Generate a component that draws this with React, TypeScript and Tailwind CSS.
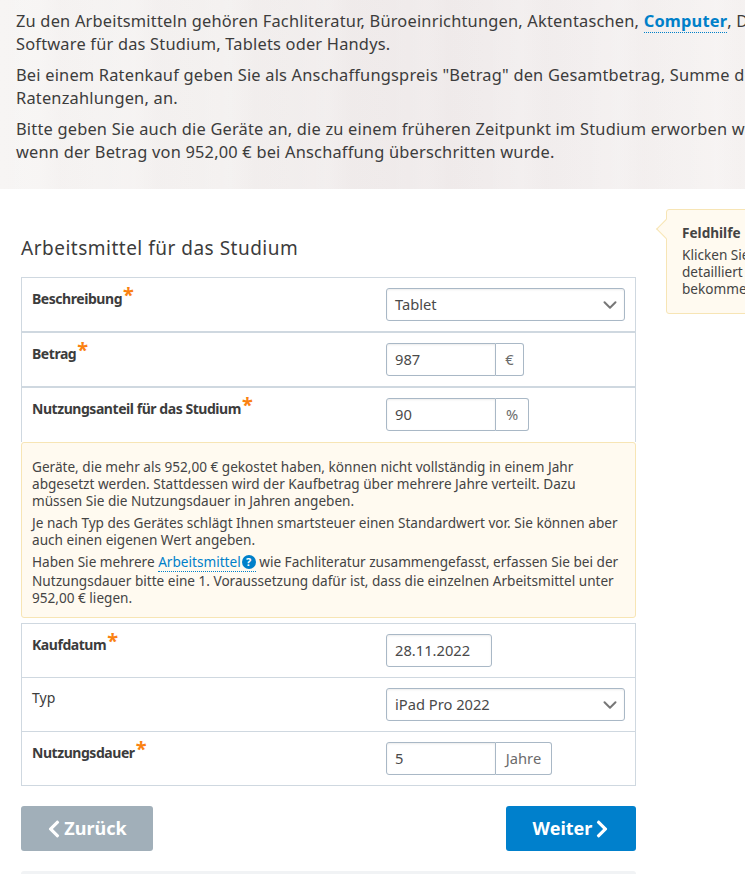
import { ChevronDown } from "lucide-react";
import { FaChevronLeft, FaChevronRight } from "react-icons/fa";
import type { ReactNode } from "react";

const Star = () => (
  <span className="relative -top-[2px] ml-px text-[20px] leading-none font-bold text-[#fa8212]">*</span>
);

function Row({
  label,
  required = true,
  border = "border-b border-[#cfd8e0]",
  height,
  children,
}: {
  label: string;
  required?: boolean;
  border?: string;
  height: string;
  children: ReactNode;
}) {
  return (
    <div className={`flex ${height} ${border}`}>
      <div
        className={`w-[364px] shrink-0 pl-[10px] text-[14px] leading-[20px] text-[#3c3c3c] ${required ? "pt-[9px]" : "pt-[10px]"}`}
      >
        {required ? <span className="font-bold tracking-[-0.45px]">{label}</span> : label}
        {required && <Star />}
      </div>
      <div className="pt-[10px]">{children}</div>
    </div>
  );
}

function Select({ value }: { value: string }) {
  return (
    <div className="flex h-[33px] w-[239px] items-center justify-between rounded-[3px] border border-[#a9b8c6] pr-[3px] pl-2 text-[14.7px] text-[#4a4a4a] shadow-[inset_0_1px_2px_rgba(0,0,0,0.08)]">
      <span>{value}</span>
      <ChevronDown className="h-[22px] w-[22px] text-[#777777]" strokeWidth={2.2} />
    </div>
  );
}

function UnitInput({ value, unit, unitWidth }: { value: string; unit: string; unitWidth: string }) {
  return (
    <div className="flex h-[33px] text-[14.7px]">
      <div className="flex w-[110px] items-center rounded-l-[3px] border border-[#a9b8c6] pl-2 text-[#4a4a4a] shadow-[inset_0_1px_2px_rgba(0,0,0,0.08)]">
        {value}
      </div>
      <div className={`flex ${unitWidth} items-center justify-center rounded-r-[3px] border border-l-0 border-[#a9b8c6] text-[#6b6b6b]`}>
        {unit}
      </div>
    </div>
  );
}

export default function App() {
  return (
    <div className="h-[874px] w-[745px] overflow-hidden bg-white font-['Noto_Sans',sans-serif] text-[#3c3c3c]">
      <div className="h-[189px] w-[745px] bg-[repeating-linear-gradient(90deg,rgba(255,255,255,0)_0px,rgba(255,255,255,0.12)_37px,rgba(230,222,222,0.08)_61px,rgba(255,255,255,0)_97px),linear-gradient(90deg,#f7f5f4,#f3f0ef_30%,#efeaea_55%,#f2eeee_75%,#f6f3f2)] pt-[9px] pl-[16px] text-[16.4px] leading-[23px] tracking-[0.2px] whitespace-nowrap">
        <p>
          Zu den Arbeitsmitteln gehören Fachliteratur, Büroeinrichtungen, Aktentaschen,{" "}
          <span className="border-b border-dotted border-[#0080c9] font-bold text-[#0080c9]">Computer</span>, Drucker,
          <br />
          Software für das Studium, Tablets oder Handys.
        </p>
        <p className="mt-[8px]">
          Bei einem Ratenkauf geben Sie als Anschaffungspreis "Betrag" den Gesamtbetrag, Summe der
          <br />
          Ratenzahlungen, an.
        </p>
        <p className="mt-[8px]">
          Bitte geben Sie auch die Geräte an, die zu einem früheren Zeitpunkt im Studium erworben wurden,
          <br />
          wenn der Betrag von 952,00 € bei Anschaffung überschritten wurde.
        </p>
      </div>

      <div className="flex">
        <div className="ml-[21px] w-[615px] shrink-0">
          <h2 className="mt-[45px] text-[19px] leading-[28px] tracking-[0.5px] text-[#3c3c3c]">Arbeitsmittel für das Studium</h2>

          <div className="mt-[15px] border border-b-0 border-[#cfd8e0]">
            <Row label="Beschreibung" height="h-[55px]" border="border-b-2 border-[#cfd8e0]">
              <Select value="Tablet" />
            </Row>
            <Row label="Betrag" height="h-[55px]" border="border-b-2 border-[#cfd8e0]">
              <UnitInput value="987" unit="€" unitWidth="w-[28px]" />
            </Row>
            <Row label="Nutzungsanteil für das Studium" height="h-[54px]" border="">
              <UnitInput value="90" unit="%" unitWidth="w-[33px]" />
            </Row>
          </div>

          <div className="rounded-[3px] border border-[#f7e5b5] bg-[#fffaf0] px-[10px] pt-[15px] pb-[11px] text-[13.6px] leading-[17px] text-[#444444]">
            <p>
              Geräte, die mehr als 952,00 € gekostet haben, können nicht vollständig in einem Jahr abgesetzt werden.
              Stattdessen wird der Kaufbetrag über mehrere Jahre verteilt. Dazu müssen Sie die Nutzungsdauer in Jahren
              angeben.
            </p>
            <p className="mt-[5px]">
              Je nach Typ des Gerätes schlägt Ihnen smartsteuer einen Standardwert vor. Sie können aber auch einen
              eigenen Wert angeben.
            </p>
            <p className="mt-[5px]">
              Haben Sie mehrere{" "}
              <span className="inline-block border-b border-dotted border-[#0080c9] pb-px text-[#0080c9]">
                Arbeitsmittel
                <span className="relative top-[-1px] ml-px inline-flex h-[14px] w-[14px] items-center justify-center rounded-full bg-[#0080c9] text-[11px] leading-none font-bold text-white">
                  ?
                </span>
              </span>{" "}
              wie Fachliteratur zusammengefasst, erfassen Sie bei der Nutzungsdauer bitte eine 1. Voraussetzung dafür
              ist, dass die einzelnen Arbeitsmittel unter 952,00 € liegen.
            </p>
          </div>

          <div className="mt-[5px] border border-[#cfd8e0]">
            <Row label="Kaufdatum" height="h-[54px]">
              <div className="flex h-[33px] w-[106px] items-center rounded-[3px] border border-[#a9b8c6] pl-2 text-[14.7px] text-[#4a4a4a] shadow-[inset_0_1px_2px_rgba(0,0,0,0.08)]">
                28.11.2022
              </div>
            </Row>
            <Row label="Typ" required={false} height="h-[54px]">
              <Select value="iPad Pro 2022" />
            </Row>
            <Row label="Nutzungsdauer" height="h-[53px]" border="">
              <UnitInput value="5" unit="Jahre" unitWidth="w-[56px]" />
            </Row>
          </div>

          <div className="mt-[20px] flex justify-between">
            <button className="flex h-[45px] w-[132px] items-center justify-center gap-[3px] rounded-[3px] bg-[#a1afb9] text-[18px] font-bold text-white">
              <FaChevronLeft className="h-[20px] w-[14px]" />
              Zurück
            </button>
            <button className="flex h-[45px] w-[130px] items-center justify-center gap-[3px] rounded-[3px] bg-[#0080cc] text-[18px] font-bold text-white">
              Weiter
              <FaChevronRight className="h-[20px] w-[14px]" />
            </button>
          </div>

          <div className="mt-[20px] h-[10px] rounded-[3px] bg-[#f1f3f5]" />
        </div>

        <div className="relative mt-[20px] ml-[30px] h-[105px] w-[200px] shrink-0 rounded-[3px] border border-[#f7e5b5] bg-[#fffaf0] pt-[14px] pl-[15px] text-[13.6px] leading-[17px] text-[#444444]">
          <span className="absolute top-[12px] -left-[8px] h-[14px] w-[14px] rotate-45 border-b border-l border-[#f7e5b5] bg-[#fffaf0]" />
          <p className="font-bold">Feldhilfe</p>
          <p className="mt-[5px] whitespace-nowrap">
            Klicken Sie
            <br />
            detailliert
            <br />
            bekommen
          </p>
        </div>
      </div>
    </div>
  );
}
